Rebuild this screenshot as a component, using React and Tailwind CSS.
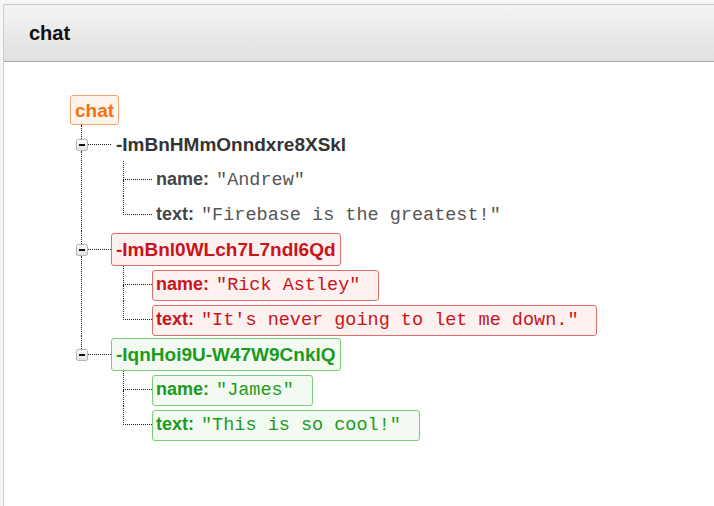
import React from "react";

const dot = "border-dotted border-[#222]";

const tones = {
  gray: {
    key: "border-transparent bg-transparent text-[#333]",
    box: "border-transparent bg-transparent",
    label: "text-[#444]",
    value: "text-[#555]",
  },
  red: {
    key: "border-[#dc6f6a] bg-[#fdf1f0] text-[#c8141a]",
    box: "border-[#dc6f6a] bg-[#fdf1f0]",
    label: "text-[#c8141a]",
    value: "text-[#c8141a]",
  },
  green: {
    key: "border-[#7acb7a] bg-[#f2faf2] text-[#1d9a1d]",
    box: "border-[#7acb7a] bg-[#f2faf2]",
    label: "text-[#1d9a1d]",
    value: "text-[#1d9a1d]",
  },
};

const nodes = [
  {
    key: "-ImBnHMmOnndxre8XSkl",
    tone: "gray",
    children: [
      ["name", '"Andrew"'],
      ["text", '"Firebase is the greatest!"'],
    ],
  },
  {
    key: "-ImBnl0WLch7L7ndl6Qd",
    tone: "red",
    children: [
      ["name", '"Rick Astley"'],
      ["text", "\"It's never going to let me down.\""],
    ],
  },
  {
    key: "-IqnHoi9U-W47W9CnklQ",
    tone: "green",
    children: [
      ["name", '"James"'],
      ["text", '"This is so cool!"'],
    ],
  },
];

function ToggleIcon() {
  return (
    <div className="w-[12px] h-[12px] shrink-0 rounded-[2px] border border-[#b8b8b8] bg-gradient-to-b from-white to-[#e2e2e2] flex items-center justify-center">
      <div className="w-[6px] h-[2px] bg-[#111]" />
    </div>
  );
}

function LeafRow({ label, value, tone, last }) {
  const t = tones[tone];
  return (
    <div className="flex">
      <div className="w-[29px] shrink-0 flex flex-col">
        <div className={`h-[19px] border-l border-b ${dot}`} />
        {!last && <div className={`flex-1 border-l ${dot}`} />}
      </div>
      <div className="pt-[4px]">
        <div
          className={`h-[31px] flex items-center border rounded-[3px] pl-[3px] pr-[18px] ${t.box}`}
        >
          <div className="flex items-baseline">
            <span className={`font-bold text-[18px] leading-none ${t.label}`}>
              {label}:
            </span>
            <span
              className={`ml-[7px] font-['Liberation_Mono','Courier_New',monospace] text-[18.5px] leading-none whitespace-pre ${t.value}`}
            >
              {value}
            </span>
          </div>
        </div>
      </div>
    </div>
  );
}

function NodeRow({ node, first, last }) {
  const t = tones[node.tone];
  return (
    <div className="flex">
      <div className="w-[12px] shrink-0 flex flex-col">
        <div
          className={`ml-[5px] border-l ${dot} ${first ? "h-[14px]" : "h-[13px]"}`}
        />
        <ToggleIcon />
        {!last && <div className={`flex-1 ml-[5px] border-l ${dot}`} />}
      </div>
      <div className={`flex flex-col ${first ? "pt-[3px]" : "pt-[2px]"}`}>
        <div className="flex items-center h-[33px]">
          <div className={`w-[23px] border-t ${dot}`} />
          <div
            className={`h-[33px] flex items-center border rounded-[3px] px-[4px] font-bold text-[19px] leading-none ${t.key}`}
          >
            {node.key}
          </div>
        </div>
        <div className="ml-[35px] flex flex-col">
          {node.children.map(([label, value], i) => (
            <LeafRow
              key={label}
              label={label}
              value={value}
              tone={node.tone}
              last={i === node.children.length - 1}
            />
          ))}
        </div>
      </div>
    </div>
  );
}

export default function App() {
  return (
    <div className="min-h-screen bg-[#f6f6f6] pl-[3px] pt-[4px] flex font-['Liberation_Sans',Arial,sans-serif]">
      <div className="flex-1 flex flex-col bg-white border-l border-[#cfcfcf]">
        <div className="h-[58px] shrink-0 border-t border-t-[#c8c8c8] border-b border-b-[#a9a9a9] bg-gradient-to-b from-[#f4f4f4] to-[#e0e0e0] flex items-center pl-[25px]">
          <span className="font-bold text-[20px] text-[#111] leading-none">chat</span>
        </div>
        <div className="pl-[66px] pt-[33px] flex flex-col">
          <div className="self-start h-[30px] flex items-center border rounded-[3px] border-[#f4a46c] bg-[#fff4ec] px-[4px] font-bold text-[19px] leading-none text-[#f47216]">
            chat
          </div>
          <div className="ml-[6px] flex flex-col">
            {nodes.map((n, i) => (
              <NodeRow
                key={n.key}
                node={n}
                first={i === 0}
                last={i === nodes.length - 1}
              />
            ))}
          </div>
        </div>
      </div>
    </div>
  );
}
